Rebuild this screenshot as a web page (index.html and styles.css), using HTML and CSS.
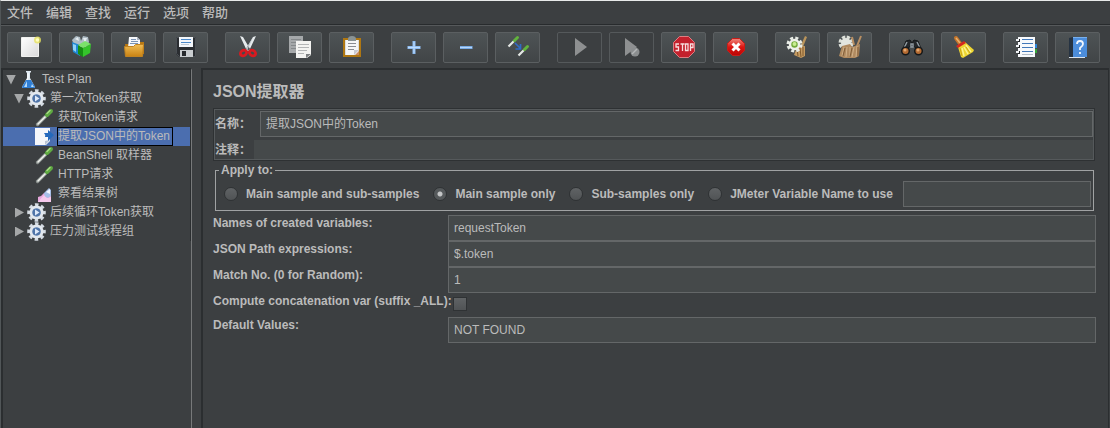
FILE: index.html
```html
<!DOCTYPE html>
<html lang="zh-CN">
<head>
<meta charset="utf-8">
<title>Apache JMeter</title>
<link rel="stylesheet" href="styles.css">
</head>
<body>
<svg class="defs" aria-hidden="true">
  <defs>
    <linearGradient id="gold" x1="0" y1="0" x2="0" y2="1"><stop offset="0" stop-color="#f0bd55"/><stop offset="1" stop-color="#c98212"/></linearGradient>
    <linearGradient id="red" x1="0" y1="0" x2="0" y2="1"><stop offset="0" stop-color="#f08a80"/><stop offset=".5" stop-color="#dd1511"/><stop offset="1" stop-color="#b80505"/></linearGradient>
    <linearGradient id="paper" x1="0" y1="0" x2="1" y2="1"><stop offset="0" stop-color="#ffffff"/><stop offset="1" stop-color="#dadada"/></linearGradient>
    <symbol id="i-flask" viewBox="0 0 19 19">
      <path d="M7 1h5v1l-1 1v5l5 9q0 1-1 1H4q-1 0-1-1l5-9V3L7 2z" fill="#dfe9f2"/>
      <path d="M7 10h5l4 7q0 1-1 1H4q-1 0-1-1z" fill="#2f7fd6"/>
      <path d="M8 11l-3 6h3zM13 14l2 3h-3z" fill="#b4dafa"/><path d="M9 3v5l-1 2" stroke="#fff" fill="none"/>
    </symbol>
    <symbol id="i-gear" viewBox="0 0 19 19">
      <circle cx="9.500" cy="9.500" r="7.800" fill="none" stroke="#d5dbe2" stroke-width="3" stroke-dasharray="3.500 2.626" stroke-dashoffset="1.750"/>
      <circle cx="9.500" cy="9.500" r="5.600" fill="#7391b8" stroke="#e3e8ee" stroke-width="3"/>
      <circle cx="9.500" cy="9.500" r="4" fill="#4f74a8"/>
      <path d="M8 6.500v6l4.500-3z" fill="#dfeafa"/>
    </symbol>
    <symbol id="i-dropper" viewBox="0 0 19 19">
      <path d="M2.500 16.500L11 8" stroke="#8c9390" stroke-width="3.200" stroke-linecap="round"/>
      <path d="M3 16L11 8" stroke="#f0f2ee" stroke-width="1.600" stroke-linecap="round"/>
      <path d="M9.500 6l3.500 3.500" stroke="#2b4a2c" stroke-width="1.500"/>
      <path d="M12 7l4-4" stroke="#5fa942" stroke-width="4" stroke-linecap="round"/>
      <path d="M12 5.500l3-3" stroke="#a9dc86" stroke-width="1.400" stroke-linecap="round"/>
    </symbol>
    <symbol id="i-extract" viewBox="0 0 19 19">
      <path d="M0 1h15v13l-4 4H0z" fill="#f4f6fa"/><path d="M15 13l-5 5v-4z" fill="#b9c4d4"/>
      <path d="M9 6h4V3l6 5-6 6v-4h-3q1-2-1-4z" fill="#2469bd"/>
    </symbol>
    <symbol id="i-tree" viewBox="0 0 19 19">
      <path d="M3 18v-5l3-1 3-3 3 2 4 1v6z" fill="#e8a8dc"/><path d="M3 18l6-7 3 3 4-1v5z" fill="#f6c9ec"/>
      <path d="M9 9l5-5 2 2v6l-3 2q-4-1-4-5z" fill="#a6bfe8"/><path d="M11 8l4-3v5z" fill="#f3f7ff"/>
    </symbol>
    <symbol id="i-new" viewBox="0 0 25 25">
      <path d="M4.500 2.500h17v19h-17z" fill="url(#paper)" stroke="#f1f1ef"/>
      <circle cx="20.500" cy="5" r="3.500" fill="#e9e45e" opacity=".8"/><circle cx="20.500" cy="5" r="1.800" fill="#ffffc0"/>
    </symbol>
    <symbol id="i-templates" viewBox="0 0 25 25">
      <path d="M3 5l4-4 4 1 1 4 2-5 5 1 1 5-3 5H6z" fill="#aebcc5"/><path d="M6 4l3-2 1 4zM14 3l4 0-2 5z" fill="#e6edf1"/>
      <path d="M3 7l8 3v11l-7-4z" fill="#2089d4"/><path d="M4 9l3 1v7l-3-2z" fill="#8ed2f8"/>
      <path d="M9 10l5 3v9l-5-3z" fill="#168f13"/><path d="M14 13l8-4-1 9-7 4z" fill="#35c42b"/><path d="M9 10l7-4 6 3-8 4z" fill="#7be26b"/>
    </symbol>
    <symbol id="i-open" viewBox="0 0 25 25">
      <path d="M4 9h6l2-2h11v12H5z" fill="#b87812"/>
      <path d="M7 13L8 2h8l3 3v9z" fill="#f5f7fa"/><path d="M10 4.500h5M10 6.500h7M9 8.500h8" stroke="#7b93b5"/><path d="M16 2v3h3z" fill="#aab4c3"/>
      <path d="M3.500 11.500h9l2-2h8l-1 12h-17z" fill="url(#gold)" stroke="#c18321"/>
    </symbol>
    <symbol id="i-save" viewBox="0 0 25 25">
      <path d="M3 2h20v20H6l-3-3z" fill="#2a2d31"/><path d="M3.500 2.500h19v19h-16l-3-3z" fill="none" stroke="#4a4f54"/>
      <path d="M6 2h14v10H6z" fill="#f3f6fa"/><path d="M8 4.500h10M8 7.500h10" stroke="#4c89c9"/><path d="M8 9.500h8" stroke="#bfcad5"/>
      <path d="M7 15h13v7H7z" fill="#c9cdd0"/><path d="M9 16h4v5H9z" fill="#272a2e"/>
    </symbol>
    <symbol id="i-cut" viewBox="0 0 25 25">
      <path d="M5 1l3 1 7 12-3 2zM21 1l-3 1-7 12 3 2z" fill="#e6eaec"/><path d="M18 2l-7 12 1 2z" fill="#b9c1c6"/>
      <ellipse cx="8.500" cy="18" rx="3.300" ry="2.600" fill="none" stroke="#d81a20" stroke-width="2.800" transform="rotate(-35 8.500 18)"/>
      <ellipse cx="17.500" cy="18" rx="3.300" ry="2.600" fill="none" stroke="#d81a20" stroke-width="2.800" transform="rotate(35 17.500 18)"/>
    </symbol>
    <symbol id="i-copy" viewBox="0 0 25 25">
      <path d="M2 1h14v17H2z" fill="#a5a8aa"/><path d="M4 4.500h10M4 7.500h10M4 10.500h10M4 13.500h10" stroke="#85898b"/>
      <path d="M9 6h15v14l-4 3H9z" fill="#f3f3f1"/><path d="M11 9.500h11M11 12.500h11M11 15.500h9M11 18.500h6" stroke="#b3b5b6"/><path d="M24 19l-5 4v-4z" fill="#7b7e80"/>
    </symbol>
    <symbol id="i-paste" viewBox="0 0 25 25">
      <path d="M5 4h16v17H5z" fill="#ddd" stroke="#af7712" stroke-width="2"/>
      <path d="M7 5h12v15H7z" fill="#f5f6f7"/><path d="M9 4q0-3 4-3t4 3v2H9z" fill="#8a9394"/>
      <path d="M9 8.500h8M9 11.500h8M9 14.500h6" stroke="#8a8c92"/><path d="M20 15l-5 5v-5z" fill="#c9c9d0"/><path d="M16 20l4-4v4z" fill="#c88a60"/>
    </symbol>
    <symbol id="i-plus" viewBox="0 0 25 25"><path d="M13 6v13M6.500 12.500h13" stroke="#8ebcf0" stroke-width="3"/><path d="M13 7v11M7 12.500h12" stroke="#bcdcff"/></symbol>
    <symbol id="i-minus" viewBox="0 0 25 25"><path d="M7 12.500h12.500" stroke="#79abe4" stroke-width="3"/><path d="M7 12.500h12" stroke="#b5d7fc"/></symbol>
    <symbol id="i-toggle" viewBox="0 0 25 25">
      <path d="M3.500 11.500l6-6M13.500 20.500l6-6" stroke="#e5e8e5" stroke-width="2.200"/>
      <path d="M9.500 5.500l3-3M19.500 14.500l3-3" stroke="#62b33d" stroke-width="3" stroke-linecap="round"/>
      <path d="M10 8l5 5M15.500 9v5h-5" fill="none" stroke="#316bc4" stroke-width="1.700"/>
    </symbol>
    <symbol id="i-play" viewBox="0 0 25 25"><path d="M8 3v18l12-9z" fill="#8e9091"/></symbol>
    <symbol id="i-play-now" viewBox="0 0 25 25"><path d="M6 3v18l12-9z" fill="#8e9091"/><circle cx="16" cy="17" r="4.500" fill="#8b8e8f"/><path d="M13 19l5-5" stroke="#b4b6b7" stroke-width="1.500"/></symbol>
    <symbol id="i-stop" viewBox="0 0 25 25">
      <path d="M8.500 1.500h9l6 6v9l-6 6h-9l-6-6v-9z" fill="#c3212d" stroke="#dd7d82"/>
      <g fill="none" stroke="#f7dfe0" stroke-width="1.300"><path d="M8 9H5v3h2.500v3.500H4.500M9.500 9h4M11.500 9v7M14.500 9h2.500v6.500h-2.500zM19.500 16V9H22v3.500h-2.500"/></g>
    </symbol>
    <symbol id="i-shutdown" viewBox="0 0 25 25">
      <path d="M9.500 3.500h7l5 5v7l-5 5h-7l-5-5v-7z" fill="url(#red)" stroke="#c71d18"/>
      <path d="M9.500 8.500l7 7M16.500 8.500l-7 7" stroke="#fff" stroke-width="3"/>
    </symbol>
    <symbol id="i-clear" viewBox="0 0 25 25">
      <path d="M20 1l2 1-4 10h-3z" fill="#b9945b"/><path d="M12 12l8-1v10l-4 2-7-3z" fill="#c49a61"/><path d="M12 14l1 7M15 13l1 9M18 12v9" stroke="#80592d"/>
      <circle cx="9.500" cy="9.500" r="6.500" fill="none" stroke="#e8ece6" stroke-width="3" stroke-dasharray="3 2.105"/>
      <circle cx="9.500" cy="9.500" r="4.500" fill="#73a93b" stroke="#eef0ea" stroke-width="2.500"/><circle cx="9.500" cy="9" r="2" fill="#c9ed91"/>
    </symbol>
    <symbol id="i-clear-all" viewBox="0 0 25 25">
      <circle cx="9" cy="8" r="5.500" fill="none" stroke="#dcdfd8" stroke-width="4" stroke-dasharray="3 1.320"/><circle cx="9" cy="8" r="5" fill="#e3e5df"/>
      <path d="M15 2l2 8M24 1l-4 10" stroke="#b98f62" stroke-width="2"/>
      <path d="M5 11l8-2 2 3 8-3-1 12-4 2H7l-5-2z" fill="#b08a60"/><path d="M7 12l-2 9M10 12l-1 10M13 12v10M17 12l-2 10M20 11l-1 11" stroke="#d0b088"/><path d="M8 13l-2 8M15 13l-2 9M21 12v9" stroke="#805d38"/>
    </symbol>
    <symbol id="i-find" viewBox="0 0 25 25">
      <path d="M3 16L7 6l4-1 2 3 2-3 4 1 4 10-4-2-5-3h-2l-5 3z" fill="#24272a" stroke="#15181a"/>
      <path d="M8 7l-3 6M18 7l3 6M12 9h2v3h-2z" stroke="#909aa1" stroke-width="1.500"/>
      <circle cx="6.500" cy="16" r="3.800" fill="#b36a31" stroke="#15181a" stroke-width="1.500"/><circle cx="19.500" cy="16" r="3.800" fill="#b36a31" stroke="#15181a" stroke-width="1.500"/>
      <circle cx="6" cy="15" r="1.500" fill="#e2a770"/><circle cx="19" cy="15" r="1.500" fill="#e2a770"/>
    </symbol>
    <symbol id="i-broom" viewBox="0 0 25 25">
      <path d="M5 3l5 7" stroke="#c2742b" stroke-width="4" stroke-linecap="round"/><path d="M5 3l4 5" stroke="#e9b06b" stroke-width="1.500"/>
      <path d="M7 12l7-5 9 8-1 2-10 6-2-1z" fill="#eed631"/><path d="M11 13l2 8M13 12l4 7M15 10l5 7" stroke="#fbf390" stroke-width="1.500"/><path d="M9 13l2 8M15 12l4 6" stroke="#cba214"/>
      <path d="M5 11l8-5 2 2-8 5z" fill="#d4291e"/>
    </symbol>
    <symbol id="i-log" viewBox="0 0 25 25">
      <path d="M5 2h17v20H5z" fill="#f7f9fc"/><path d="M22 9h2v4h-2z" fill="#2f86da"/><path d="M22 14h2v4h-2z" fill="#35a43a"/>
      <path d="M9 4.500h11M9 8.500h11M9 12.500h11M9 16.500h11" stroke="#4278b9" stroke-width="1.200"/><path d="M9 19.500h11" stroke="#b0bac5"/>
      <path d="M5 4h2v3H5zM5 10h2v3H5zM5 16h2v3H5z" fill="#202326"/><path d="M3 5h3M3 11h3M3 17h3" stroke="#eef1f4" stroke-width="2"/>
    </symbol>
    <symbol id="i-help" viewBox="0 0 25 25">
      <path d="M4 3l4-1v20l-4 1z" fill="#263342"/><path d="M8 2h14v20H8z" fill="#4c8ddb"/><path d="M4 22h16v1H4z" fill="#dce4ed"/><path d="M8 2h14v1H8z" fill="#78b0ee"/>
      <path d="M12 9q0-3 3-3t3 3q0 2-3 4v2M15 17v2" fill="none" stroke="#f2f7fd" stroke-width="1.800"/>
    </symbol>
  </defs>
</svg>
<div class="app">
  <nav class="menu" aria-label="主菜单">
    <button>文件</button><button>编辑</button><button>查找</button><button>运行</button><button>选项</button><button>帮助</button>
  </nav>
  <div class="toolbar" role="toolbar">
    <div class="group">
      <button aria-label="新建"><svg><use href="#i-new"/></svg></button>
      <button aria-label="模板"><svg><use href="#i-templates"/></svg></button>
      <button aria-label="打开"><svg><use href="#i-open"/></svg></button>
      <button aria-label="保存"><svg><use href="#i-save"/></svg></button>
    </div>
    <div class="group">
      <button aria-label="剪切"><svg><use href="#i-cut"/></svg></button>
      <button aria-label="复制"><svg><use href="#i-copy"/></svg></button>
      <button aria-label="粘贴"><svg><use href="#i-paste"/></svg></button>
    </div>
    <div class="group">
      <button aria-label="全部展开"><svg><use href="#i-plus"/></svg></button>
      <button aria-label="全部折叠"><svg><use href="#i-minus"/></svg></button>
      <button aria-label="切换"><svg><use href="#i-toggle"/></svg></button>
    </div>
    <div class="group">
      <button disabled aria-label="启动"><svg><use href="#i-play"/></svg></button>
      <button disabled aria-label="不停顿启动"><svg><use href="#i-play-now"/></svg></button>
      <button aria-label="停止"><svg><use href="#i-stop"/></svg></button>
      <button aria-label="关闭"><svg><use href="#i-shutdown"/></svg></button>
    </div>
    <div class="group">
      <button aria-label="清除"><svg><use href="#i-clear"/></svg></button>
      <button aria-label="清除全部"><svg><use href="#i-clear-all"/></svg></button>
    </div>
    <div class="group">
      <button aria-label="搜索"><svg><use href="#i-find"/></svg></button>
      <button aria-label="重置搜索"><svg><use href="#i-broom"/></svg></button>
    </div>
    <div class="group">
      <button aria-label="函数助手"><svg><use href="#i-log"/></svg></button>
      <button aria-label="帮助"><svg><use href="#i-help"/></svg></button>
    </div>
  </div>
  <div class="workspace">
    <aside class="tree-panel">
      <ul class="tree" role="tree">
        <li role="treeitem" aria-expanded="true">
          <div class="node"><span class="arrow open"></span><svg><use href="#i-flask"/></svg><span class="name">Test Plan</span></div>
          <ul role="group">
            <li role="treeitem" aria-expanded="true">
              <div class="node level-1"><span class="arrow open"></span><svg><use href="#i-gear"/></svg><span class="name">第一次Token获取</span></div>
              <ul role="group">
                <li role="treeitem"><div class="node level-2"><span class="arrow"></span><svg><use href="#i-dropper"/></svg><span class="name">获取Token请求</span></div></li>
                <li role="treeitem" aria-selected="true"><div class="node level-2 selected"><span class="arrow"></span><svg><use href="#i-extract"/></svg><span class="name">提取JSON中的Token</span></div></li>
                <li role="treeitem"><div class="node level-2"><span class="arrow"></span><svg><use href="#i-dropper"/></svg><span class="name">BeanShell 取样器</span></div></li>
                <li role="treeitem"><div class="node level-2"><span class="arrow"></span><svg><use href="#i-dropper"/></svg><span class="name">HTTP请求</span></div></li>
                <li role="treeitem"><div class="node level-2"><span class="arrow"></span><svg><use href="#i-tree"/></svg><span class="name">察看结果树</span></div></li>
              </ul>
            </li>
            <li role="treeitem" aria-expanded="false"><div class="node level-1"><span class="arrow closed"></span><svg><use href="#i-gear"/></svg><span class="name">后续循环Token获取</span></div></li>
            <li role="treeitem" aria-expanded="false"><div class="node level-1"><span class="arrow closed"></span><svg><use href="#i-gear"/></svg><span class="name">压力测试线程组</span></div></li>
          </ul>
        </li>
      </ul>
    </aside>
    <main class="editor">
      <h1>JSON提取器</h1>
      <div class="identity">
        <div class="id-row"><label for="name">名称：</label><input id="name" class="field" type="text" value="提取JSON中的Token"></div>
        <div class="id-row comment"><label for="comment">注释：</label><input id="comment" type="text"></div>
      </div>
      <fieldset class="scope">
        <legend>Apply to:</legend>
        <div class="options">
          <label><input type="radio" name="scope">Main sample and sub-samples</label>
          <label><input type="radio" name="scope" checked>Main sample only</label>
          <label><input type="radio" name="scope">Sub-samples only</label>
          <label><input type="radio" name="scope">JMeter Variable Name to use</label>
          <input class="field" type="text" aria-label="JMeter Variable Name">
        </div>
      </fieldset>
      <div class="params">
        <label for="vars">Names of created variables:</label><input id="vars" class="field" type="text" value="requestToken">
        <label for="paths">JSON Path expressions:</label><input id="paths" class="field" type="text" value="$.token">
        <label for="match">Match No. (0 for Random):</label><input id="match" class="field" type="text" value="1">
        <label for="concat">Compute concatenation var (suffix _ALL):</label><input id="concat" type="checkbox">
        <label for="defaults">Default Values:</label><input id="defaults" class="field" type="text" value="NOT FOUND">
      </div>
    </main>
  </div>
</div>
</body>
</html>
```
FILE: styles.css
```css
* { box-sizing: border-box; }

body {
  margin: 0;
  background: #3c3f41;
  color: #bbbbbb;
  font: 12px/16px "Liberation Sans", "Noto Sans CJK SC", sans-serif;
}

button, input { font: inherit; color: inherit; margin: 0; }
ul { list-style: none; margin: 0; padding: 0; }
.defs { position: absolute; width: 0; height: 0; }

.app {
  display: flex;
  flex-direction: column;
  min-height: 100vh;
  border-top: 1px solid #e8eaea;
  border-left: 1px solid #515658;
}

/* Menu bar */
.menu {
  display: flex;
  gap: 13px;
  height: 24px;
  padding: 0 6px;
  border-bottom: 1px solid #282b2d;
}
.menu button {
  padding: 0;
  border: 0;
  background: none;
  font-size: 13px;
  font-weight: 500;
}

/* Toolbar */
.toolbar {
  display: flex;
  gap: 17px;
  padding: 6px 6px 5px;
  border-top: 1px solid #56595b;
}
.group { display: flex; gap: 7px; }
.group button {
  display: grid;
  place-items: center;
  width: 45px;
  height: 31px;
  padding: 0;
  border: 1px solid #5b5f61;
  border-radius: 2px;
  background: linear-gradient(#4e5355, #414547);
}
.group button:disabled { background: #3c3f41; border-color: #55595b; }
.group svg { width: 25px; height: 25px; }

/* Split panes */
.workspace { display: flex; flex: 1; gap: 9px; }
.tree-panel {
  width: 191px;
  border: 2px solid #2b2e30;
  border-width: 2px 2px 0;
  border-right: 1px solid #77797a;
}
.tree { border-right: 1px solid #2b2e30; }
.node {
  display: flex;
  align-items: center;
  height: 19px;
  padding-left: 3px;
}
.level-1 { padding-left: 11px; }
.level-2 { padding-left: 19px; }
.node svg { width: 19px; height: 19px; margin-right: 3px; }
.name {
  padding-right: 2px;
  border: 1px solid transparent;
  line-height: 17px;
  white-space: nowrap;
}
.selected { background: #4b6eaf; }
.selected .name { border-color: #000; }
.arrow { width: 13px; height: 10px; }
.arrow::before { content: ""; display: block; width: 10px; height: 10px; background: #a5a7a8; }
.arrow:not(.open):not(.closed)::before { display: none; }
.open::before { clip-path: polygon(0 0, 100% 0, 50% 100%); }
.closed::before { clip-path: polygon(10% 0, 100% 50%, 10% 100%); }

/* Element editor */
.editor {
  flex: 1;
  margin-right: 1px;
  padding: 11px 12px 0 10px;
  border: 2px solid #2b2e30;
  border-width: 2px 1px 0 2px;
}
h1 {
  margin: 0 0 5px;
  font-size: 16px;
  line-height: 22px;
}
label, legend { font-weight: 700; }
.field {
  height: 26px;
  padding: 0 5px 1px;
  border: 1px solid #646768;
  background: #45494a;
}
.identity {
  padding: 1px 0 0 1px;
  border: 1px solid #2e3133;
  outline: 1px solid #55595b;
  outline-offset: -2px;
  margin-right: 1px;
}
.id-row { display: flex; align-items: center; padding: 1px 1px 1px 0; }
.id-row input { flex: 1; min-width: 0; }
.id-row .field { padding-bottom: 4px; }
.id-row label { width: 45px; }
.id-row.comment { padding-top: 2px; }
.comment label { width: 39px; }
.comment input { height: 19px; border: 0; background: #45494a; }

.scope {
  min-width: 0;
  margin: 1px 2px 4px;
  padding: 0 2px 3px 8px;
  border: 1px solid #a0a2a3;
}
.scope legend { padding: 0 2px; margin-left: -5px; }
.options { display: flex; align-items: center; padding-top: 3px; }
.options label { display: flex; align-items: center; gap: 8px; margin-right: 14px; white-space: nowrap; }
.options label:last-of-type { margin-right: 10px; }
.options .field { flex: 1; min-width: 0; }
input[type="radio"], input[type="checkbox"] {
  appearance: none;
  width: 14px;
  height: 14px;
  border: 1px solid #2f3234;
  background: linear-gradient(#606365, #505355);
}
input[type="radio"] { border-radius: 50%; }
input[type="radio"]:checked { background: radial-gradient(circle, #c4c6c7 2px, #55595b 3px); }

.params { display: grid; grid-template-columns: 235px 1fr; }
.params label { white-space: nowrap; }
.params input[type="checkbox"] { margin: 4px 0 6px 5px; }
```
